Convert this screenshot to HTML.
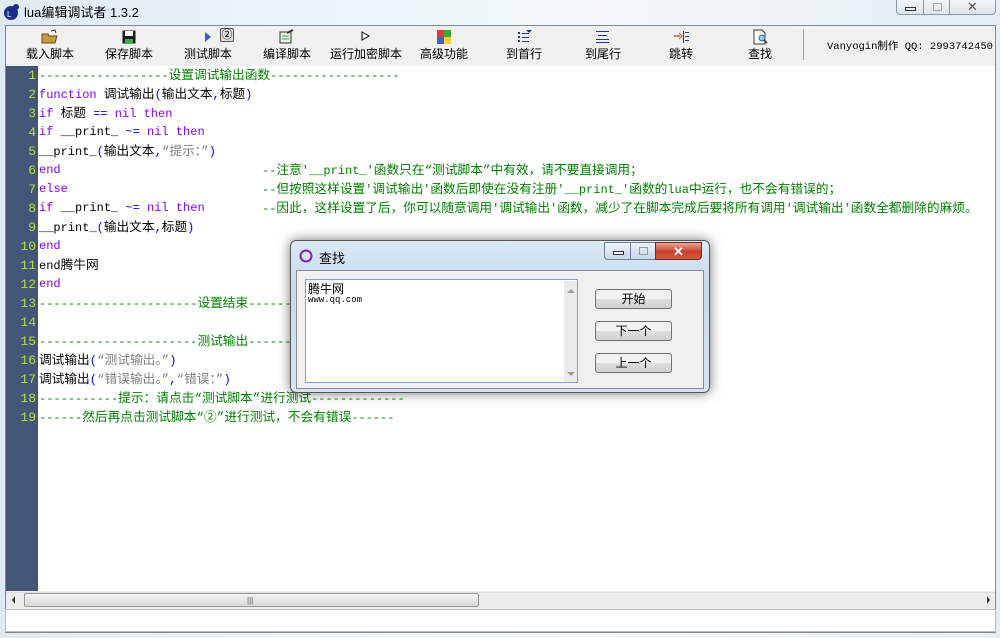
<!DOCTYPE html>
<html><head><meta charset="utf-8"><style>
*{margin:0;padding:0;box-sizing:border-box}
body{width:1000px;height:638px;overflow:hidden;background:linear-gradient(90deg,#dfeaf2,#eef7fb 40%,#f4f8fa 60%,#e4edf3);font-family:"Liberation Sans","Noto Sans CJK SC",sans-serif;position:relative}
.abs{position:absolute}
.title{left:24px;top:2px;font-size:13px;color:#000}
.wbtn{top:0;height:15px;border:1px solid #8a97a6;border-top:none;background:linear-gradient(#f4f7fa,#dde5ec)}
.client{left:5px;top:25px;width:991px;height:608px;background:#f0f0f0;border:1px solid #7f8a96}
.tb{left:6px;top:26px;width:989px;height:39px;background:#f0f0f0}
.tbt{top:45px;font-size:12px;color:#000;white-space:nowrap}
.ed{left:6px;top:66px;width:989px;height:525px;background:#fff}
.gut{left:6px;top:66px;width:32px;height:525px;background:#435678}
.ln{position:absolute;left:6px;width:30px;text-align:right;color:#b6e03a;font:13px "Liberation Mono","Noto Sans CJK SC",monospace}
.cl{position:absolute;left:39px;font:12px "Liberation Mono","Noto Sans CJK SC",monospace;white-space:pre;color:#000;line-height:19px}
.cl i{font-style:normal;font-size:12.7px}
.k{color:#8000ff}.g{color:#008000}.b{color:#0000ff}.s{color:#808080}
.dlg{left:290px;top:240px;width:420px;height:153px;border:1px solid #555;border-radius:6px;background:linear-gradient(#dbe8f5,#c8daee 30%,#d5e4f2);box-shadow:0 0 12px rgba(0,0,0,.55)}
.btn{position:absolute;left:304px;width:77px;height:20px;border:1px solid #707070;border-radius:3px;background:linear-gradient(#f2f2f2 50%,#dedede 50%,#d0d0d0);font-size:12px;text-align:center;line-height:18px}
</style></head><body>
<svg class="abs" style="left:2px;top:3px" width="18" height="18"><circle cx="9" cy="10" r="7" fill="#1a2f8a"/><text x="5" y="14" font-size="8" fill="#fff" font-family="Liberation Sans">L</text><circle cx="14" cy="4" r="3" fill="#1a2f8a"/></svg>
<div class="abs title">lua编辑调试者 1.3.2</div>
<div class="abs wbtn" style="left:896px;width:28px;border-radius:0 0 0 4px"><div style="margin:7px 8px;width:11px;height:4px;border:1px solid #333"></div></div>
<div class="abs wbtn" style="left:923px;width:27px"><div style="margin:3px 9px;width:9px;height:8px;border:1px solid #aaa"></div></div>
<div class="abs wbtn" style="left:949px;width:47px;border-radius:0 0 4px 0;text-align:center;font-size:13px;color:#555;line-height:13px">✕</div>
<div class="abs client"></div>
<div class="abs tb"></div>
<svg class="abs" style="left:41px;top:29px" width="18" height="15"><path d="M1 5h6l1 2h8l-2 7H1z" fill="#c99a3c" stroke="#6b4a10"/><path d="M10 2l4-1 1 3" stroke="#333" fill="none"/></svg>
<svg class="abs" style="left:122px;top:30px" width="14" height="14"><rect x="0.5" y="0.5" width="13" height="13" fill="#1d1d1d"/><rect x="3" y="1" width="8" height="5" fill="#fff"/><rect x="3" y="9" width="8" height="5" fill="#3fae49"/></svg>
<div class="abs" style="left:205px;top:32px;width:0;height:0;border-left:6px solid #2f63c4;border-top:5px solid transparent;border-bottom:5px solid transparent"></div>
<div class="abs" style="left:220px;top:28px;width:14px;height:14px;border:1px solid #555;border-radius:2px;background:#ddd;font-size:11px;line-height:12px;text-align:center">②</div>
<svg class="abs" style="left:279px;top:29px" width="16" height="15"><rect x="1" y="3" width="11" height="11" fill="#eee" stroke="#333"/><path d="M3 7h7M3 10h7" stroke="#3a3"/><path d="M8 4l6-3" stroke="#333" stroke-width="2"/></svg>
<svg class="abs" style="left:361px;top:31px" width="10" height="10"><path d="M1 1l7 4-7 4z" fill="#fff" stroke="#000"/></svg>
<svg class="abs" style="left:437px;top:30px" width="15" height="15"><rect x="0" y="0" width="7" height="7" fill="#e33"/><rect x="7" y="0" width="7" height="7" fill="#3a3"/><rect x="0" y="7" width="7" height="7" fill="#36c"/><rect x="7" y="7" width="7" height="7" fill="#fc3"/></svg>
<svg class="abs" style="left:516px;top:30px" width="16" height="14"><g fill="#1f3b7a"><rect x="2" y="2" width="2" height="2"/><rect x="2" y="6" width="2" height="2"/><rect x="2" y="10" width="2" height="2"/><rect x="6" y="3" width="7" height="1"/><rect x="6" y="7" width="7" height="1"/><rect x="6" y="11" width="7" height="1"/><path d="M10 0h6l-3 3z"/></g></svg>
<svg class="abs" style="left:595px;top:30px" width="16" height="14"><g fill="#1f3b7a"><rect x="1" y="1" width="13" height="1"/><rect x="3" y="5" width="9" height="1"/><rect x="1" y="9" width="13" height="1"/><rect x="1" y="12" width="13" height="1"/></g></svg>
<svg class="abs" style="left:673px;top:30px" width="18" height="14"><path d="M1 6h6" stroke="#e0502a" stroke-width="1.5"/><path d="M6 3l3 3-3 3" fill="none" stroke="#e0502a"/><g fill="#1f3b7a"><rect x="10" y="1" width="1" height="12"/><rect x="12" y="2" width="4" height="1"/><rect x="12" y="6" width="4" height="1"/><rect x="12" y="10" width="4" height="1"/></g></svg>
<svg class="abs" style="left:753px;top:29px" width="16" height="16"><path d="M1 1h8l3 3v11H1z" fill="#fff" stroke="#333"/><circle cx="9" cy="9" r="3" fill="#9cd" stroke="#369"/><path d="M11 11l3 3" stroke="#333" stroke-width="1.5"/></svg>
<div class="abs tbt" style="left:26px">载入脚本</div>
<div class="abs tbt" style="left:105px">保存脚本</div>
<div class="abs tbt" style="left:184px">测试脚本</div>
<div class="abs tbt" style="left:263px">编译脚本</div>
<div class="abs tbt" style="left:330px">运行加密脚本</div>
<div class="abs tbt" style="left:420px">高级功能</div>
<div class="abs tbt" style="left:506px">到首行</div>
<div class="abs tbt" style="left:585px">到尾行</div>
<div class="abs tbt" style="left:669px">跳转</div>
<div class="abs tbt" style="left:748px">查找</div>
<div class="abs" style="left:803px;top:29px;width:1px;height:31px;background:#a0a0a0"></div>
<div class="abs" style="left:827px;top:38px;font:10.5px 'Liberation Mono','Noto Sans CJK SC',monospace;color:#000;white-space:pre">Vanyogin制作 QQ: 2993742450</div>
<div class="abs ed"></div>
<div class="abs gut"></div>
<div class="abs" style="left:0;top:68px;width:1000px;height:380px">
<div class="ln" style="top:0">1</div><div class="ln" style="top:19px">2</div><div class="ln" style="top:38px">3</div><div class="ln" style="top:57px">4</div><div class="ln" style="top:76px">5</div><div class="ln" style="top:95px">6</div><div class="ln" style="top:114px">7</div><div class="ln" style="top:133px">8</div><div class="ln" style="top:152px">9</div><div class="ln" style="top:171px">10</div><div class="ln" style="top:190px">11</div><div class="ln" style="top:209px">12</div><div class="ln" style="top:228px">13</div><div class="ln" style="top:247px">14</div><div class="ln" style="top:266px">15</div><div class="ln" style="top:285px">16</div><div class="ln" style="top:304px">17</div><div class="ln" style="top:323px">18</div><div class="ln" style="top:342px">19</div>
<div class="cl" style="top:-2px"><span class="g">------------------<i>设置调试输出函数</i>------------------</span></div>
<div class="cl" style="top:17px"><span class="k">function</span> <i>调试输出</i><span class="b">(</span><i>输出文本</i><span class="b">,</span><i>标题</i><span class="b">)</span></div>
<div class="cl" style="top:36px"><span class="k">if</span> <i>标题</i> <span class="b">==</span> <span class="k">nil then</span></div>
<div class="cl" style="top:55px"><span class="k">if</span> __print_ <span class="b">~=</span> <span class="k">nil then</span></div>
<div class="cl" style="top:74px">__print_<span class="b">(</span><i>输出文本</i><span class="b">,</span><span class="s"><i>“提示：”</i></span><span class="b">)</span></div>
<div class="cl" style="top:93px"><span class="k">end</span></div>
<div class="cl" style="top:112px"><span class="k">else</span></div>
<div class="cl" style="top:131px"><span class="k">if</span> __print_ <span class="b">~=</span> <span class="k">nil then</span></div>
<div class="cl g" style="top:93px;left:262px">--<i>注意</i>'__print_'<i>函数只在“测试脚本”中有效，请不要直接调用；</i></div>
<div class="cl g" style="top:112px;left:262px">--<i>但按照这样设置</i>'<i>调试输出</i>'<i>函数后即使在没有注册</i>'__print_'<i>函数的</i>lua<i>中运行，也不会有错误的；</i></div>
<div class="cl g" style="top:131px;left:262px">--<i>因此，这样设置了后，你可以随意调用</i>'<i>调试输出</i>'<i>函数，减少了在脚本完成后要将所有调用</i>'<i>调试输出</i>'<i>函数全都删除的麻烦。</i></div>
<div class="cl" style="top:150px">__print_<span class="b">(</span><i>输出文本</i><span class="b">,</span><i>标题</i><span class="b">)</span></div>
<div class="cl" style="top:169px"><span class="k">end</span></div>
<div class="cl" style="top:188px">end<i>腾牛网</i></div>
<div class="cl" style="top:207px"><span class="k">end</span></div>
<div class="cl g" style="top:226px">----------------------<i>设置结束</i>----------------------</div>
<div class="cl g" style="top:264px">----------------------<i>测试输出</i>----------------------</div>
<div class="cl" style="top:283px"><i>调试输出</i><span class="b">(</span><span class="s"><i>“测试输出。”</i></span><span class="b">)</span></div>
<div class="cl" style="top:302px"><i>调试输出</i><span class="b">(</span><span class="s"><i>“错误输出。”</i></span><span class="b">,</span><span class="s"><i>“错误：”</i></span><span class="b">)</span></div>
<div class="cl g" style="top:321px">-----------<i>提示：请点击“测试脚本”进行测试</i>-------------</div>
<div class="cl g" style="top:340px">------<i>然后再点击测试脚本“②”进行测试，不会有错误</i>------</div>
</div>
<div class="abs" style="left:6px;top:592px;width:989px;height:16px;background:#ececec;border-top:1px solid #ddd"></div>
<div class="abs" style="left:24px;top:593px;width:455px;height:14px;border:1px solid #999;border-radius:2px;background:linear-gradient(#f3f3f3,#d8d8d8)"></div>
<div class="abs" style="left:247px;top:596px;font-size:8px;color:#555">|||</div>
<div class="abs" style="left:12px;top:596px;width:0;height:0;border-right:3px solid #333;border-top:4px solid transparent;border-bottom:4px solid transparent"></div>
<div class="abs" style="left:987px;top:596px;width:0;height:0;border-left:3px solid #333;border-top:4px solid transparent;border-bottom:4px solid transparent"></div>
<div class="abs" style="left:5px;top:609px;width:991px;height:23px;background:#fff;border:1px solid #bbb"></div>
<div class="abs dlg">
<svg style="position:absolute;left:8px;top:8px" width="14" height="14"><circle cx="7" cy="7" r="5.5" fill="none" stroke="#7a2aa8" stroke-width="2"/></svg>
<div style="position:absolute;left:28px;top:7px;font-size:13px">查找</div>
<div style="position:absolute;left:313px;top:1px;width:27px;height:18px;border:1px solid #6d7e96;border-radius:0 0 0 4px;background:linear-gradient(#eef3f9,#c9d6e6)"><div style="margin:8px 8px;width:11px;height:4px;border:1px solid #333;background:#fff"></div></div>
<div style="position:absolute;left:339px;top:1px;width:26px;height:18px;border:1px solid #6d7e96;background:linear-gradient(#eef3f9,#c9d6e6)"><div style="margin:4px 8px;width:9px;height:8px;border:1px solid #999"></div></div>
<div style="position:absolute;left:364px;top:1px;width:47px;height:18px;border:1px solid #6d2a20;border-radius:0 0 4px 0;background:linear-gradient(#e9a593,#c6412b 55%,#d65d44);color:#fff;text-align:center;font-size:13px;font-weight:bold;line-height:17px">✕</div>
<div style="position:absolute;left:5px;top:29px;width:408px;height:119px;background:#f0f0f0;border:1px solid #888"></div>
<div style="position:absolute;left:14px;top:38px;width:273px;height:104px;background:#fff;border:1px solid #7aa6d6"></div>
<div style="position:absolute;left:273px;top:40px;width:13px;height:101px;background:#eaeaea"></div>
<div style="position:absolute;left:276px;top:48px;border-bottom:4px solid #999;border-left:4px solid transparent;border-right:4px solid transparent"></div>
<div style="position:absolute;left:276px;top:131px;border-top:4px solid #999;border-left:4px solid transparent;border-right:4px solid transparent"></div>
<div style="position:absolute;left:17px;top:39px;font-size:12px">腾牛网</div>
<div style="position:absolute;left:17px;top:54px;font:9px 'Liberation Mono',monospace">www.qq.com</div>
<div class="btn" style="top:48px">开始</div>
<div class="btn" style="top:80px">下一个</div>
<div class="btn" style="top:112px">上一个</div>
</div>
</body></html>
